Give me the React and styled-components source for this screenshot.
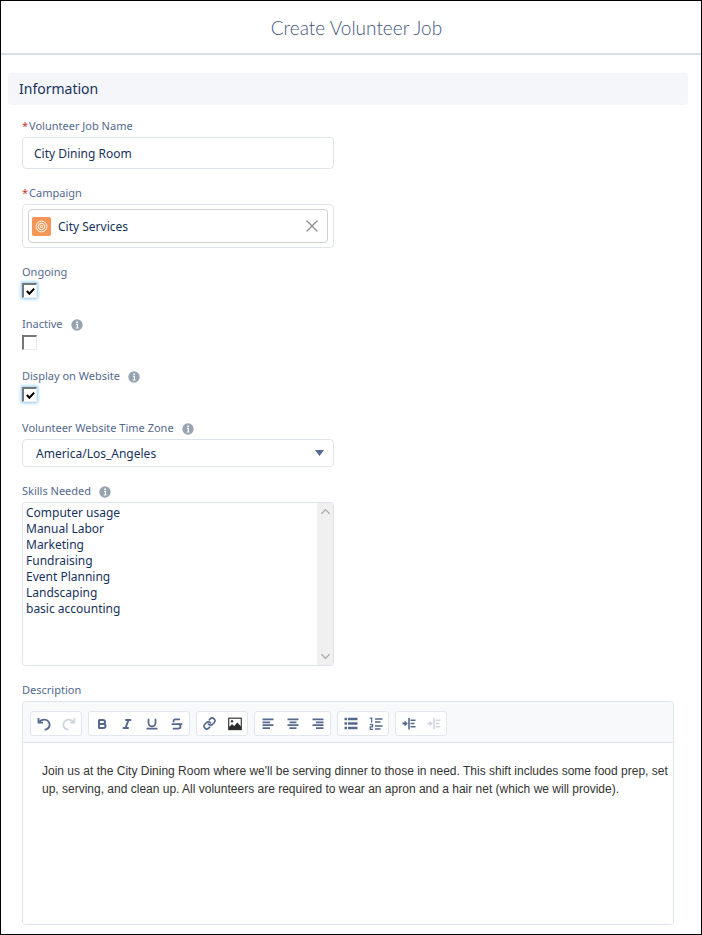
import { useState } from 'react';
import styled, { createGlobalStyle, css } from 'styled-components';
import { Bold, Italic, Underline, Strikethrough, Link, X, ChevronUp, ChevronDown } from 'lucide-react';

const GlobalStyle = createGlobalStyle`
    * {
        box-sizing: border-box;
    }
    body {
        margin: 0;
        background: #fff;
        color: #16325c;
        font-family: "Noto Sans", "Open Sans", sans-serif;
        font-size: 12px;
    }
    button, input, select, textarea {
        font: inherit;
        color: inherit;
    }
`
const Page = styled.main`
    min-height: 100vh;
    border: 1px solid #000;
    padding-bottom: 9px;
`
const Header = styled.header`
    display: flex;
    align-items: center;
    justify-content: center;
    height: 54px;
    padding: 2px 0 0 11px;
    border-bottom: 2px solid #d8dde6;
`
const Title = styled.h1`
    margin: 0;
    color: #3f557c;
    font-family: Lato, sans-serif;
    font-size: 19px;
    font-weight: 300;
    line-height: 24px;
`
const Section = styled.section`
    padding: 18px 13px 0 7px;
`
const SectionTitle = styled.h2`
    margin: 0;
    padding: 0 11px;
    border-radius: 4px;
    background: #f4f6fa;
    font-size: 14px;
    font-weight: 400;
    line-height: 32px;
`
const Fields = styled.form`
    display: flex;
    flex-direction: column;
    gap: 15px;
    padding: 12px 14px 0;
`
const Field = styled.div`
    display: flex;
    flex-direction: column;
    align-items: flex-start;
    gap: 3px;
    width: 100%;
    max-width: ${({ $wide }) => ($wide ? 'none' : '312px')};
`
const LabelRow = styled.div`
    display: flex;
    align-items: center;
    gap: 8px;
    height: 17px;
    color: #54698d;
    font-size: 11px;
    line-height: 17px;
`
const Required = styled.abbr`
    margin-right: 1px;
    color: #c23934;
    text-decoration: none;
`
const InfoButton = styled.button`
    display: flex;
    padding: 2px 0 0;
    border: none;
    background: none;
`
const box = css`
    width: 100%;
    border: 1px solid #dfe3ec;
    border-radius: 4px;
    background: #fff;
`
const TextInput = styled.input`
    ${box}
    height: 32px;
    padding: 0 11px;
    outline: none;
`
const Lookup = styled.div`
    ${box}
    padding: 4px 5px;
`
const Pill = styled.div`
    display: flex;
    align-items: center;
    gap: 7px;
    height: 34px;
    padding: 0 5px 0 3px;
    border: 1px solid #d0d0d0;
    border-radius: 4px;
`
const PillText = styled.span`
    flex: 1;
`
const ClearButton = styled.button`
    display: flex;
    padding: 0;
    border: none;
    background: none;
    color: #8c8c8c;
`
const Checkbox = styled.input`
    appearance: none;
    width: 15px;
    height: 15px;
    margin: 0 0 2px;
    border: solid;
    border-width: 2px 1px 1px 2px;
    border-color: #767676 #ececec #ececec #767676;
    background: #fff;
    &:checked {
        background: url("data:image/svg+xml,%3Csvg xmlns='http://www.w3.org/2000/svg' viewBox='0 0 12 12'%3E%3Cpath d='M2 5.5 4.8 8.5 10 2.8' fill='none' stroke='%23000' stroke-width='2.2'/%3E%3C/svg%3E") center / 11px no-repeat;
        box-shadow: 0 0 3px 1px #8cc8f5;
    }
`
const Select = styled.select`
    ${box}
    appearance: none;
    height: 28px;
    padding: 0 24px 0 13px;
    background: url("data:image/svg+xml,%3Csvg xmlns='http://www.w3.org/2000/svg' viewBox='0 0 9 6'%3E%3Cpath d='M0 0H9L4.5 6Z' fill='%2354698d'/%3E%3C/svg%3E") right 9px center / 9px 6px no-repeat;
`
const ListFrame = styled.div`
    ${box}
    display: flex;
    height: 164px;
    overflow: hidden;
`
const ListBox = styled.select`
    flex: 1;
    height: 100%;
    padding: 1px 0;
    border: none;
    outline: none;
    background: #fff;
    scrollbar-width: none;
`
const ListOption = styled.option`
    height: 16px;
    min-height: 16px;
    padding: 0 3px;
    line-height: 16px;
`
const Rail = styled.div`
    display: flex;
    flex-direction: column;
    justify-content: space-between;
    width: 16px;
    background: #f0f0f0;
`
const RailButton = styled.button`
    display: flex;
    align-items: center;
    justify-content: center;
    height: 17px;
    padding: 0;
    border: none;
    background: none;
    color: #a3a3a3;
`
const Editor = styled.div`
    ${box}
    overflow: hidden;
`
const Toolbar = styled.div`
    display: flex;
    flex-wrap: wrap;
    gap: 6px;
    padding: 9px 7px 6px;
    border-bottom: 1px solid #dfe3ec;
    background: #f7f9fb;
`
const ToolGroup = styled.div`
    display: flex;
    height: 25px;
    border: 1px solid #e2e6ee;
    border-radius: 3px;
    background: #fff;
`
const ToolButton = styled.button`
    display: flex;
    align-items: center;
    justify-content: center;
    width: 25px;
    padding: 0;
    border: none;
    background: none;
    color: #54698d;
    &:disabled {
        color: #cfd5df;
    }
`
const EditorText = styled.textarea`
    display: block;
    width: 100%;
    height: 181px;
    padding: 19px 4px 19px 19px;
    border: none;
    outline: none;
    resize: none;
    color: #333;
    font-family: "Liberation Sans", Arial, sans-serif;
    font-size: 12px;
    line-height: 18px;
`

const Svg = ({ children, size = 14 }) => (
    <svg width={size} height={size} viewBox={`0 0 ${size} ${size}`} fill="none" stroke="currentColor" aria-hidden="true">
        {children}
    </svg>
)

const InfoIcon = () => (
    <Svg size={12}>
        <circle cx="6" cy="6" r="5.7" fill="#97a3b1" stroke="none" />
        <path d="M5.1 5.4H6.4V9M4.7 9H7.5" stroke="#fff" strokeWidth="1.2" />
        <circle cx="6.1" cy="3.2" r="0.9" fill="#fff" stroke="none" />
    </Svg>
)

const CampaignIcon = () => (
    <Svg size={19}>
        <rect width="19" height="19" rx="2" fill="#f49756" stroke="none" />
        <g stroke="#fff">
            <circle cx="9.5" cy="9.5" r="5.4" />
            <circle cx="9.5" cy="9.5" r="3.2" />
            <circle cx="9.5" cy="9.5" r="1.1" />
        </g>
    </Svg>
)

const UndoIcon = () => (
    <Svg>
        <path d="M1.5 1V5.6H6" strokeWidth="1.8" />
        <path d="M2 5.2C4.5 2.2 9 1.8 11.3 4.4C14 7.6 12.3 12.4 7.6 12.8" strokeWidth="1.8" />
    </Svg>
)

const RedoIcon = () => (
    <Svg>
        <path d="M12.5 1V5.6H8" strokeWidth="1.8" />
        <path d="M12 5.2C9.5 2.2 5 1.8 2.7 4.4C0 7.6 1.7 12.4 6.4 12.8" strokeWidth="1.8" />
    </Svg>
)

const ImageIcon = () => (
    <Svg>
        <rect x="0.7" y="1.2" width="12.6" height="11.4" stroke="#3a3a3a" strokeWidth="1.2" />
        <path d="M1 12.5V10L4 7.2L6.2 9L9.3 5.6L13 9.4V12.5Z" fill="#2b2b2b" stroke="none" />
        <circle cx="4" cy="4.2" r="1.2" fill="#3a3a3a" stroke="none" />
    </Svg>
)

const BarsIcon = ({ bars }) => (
    <Svg>
        {bars.map(([x, width], i) => (
            <path key={i} d={`M${x} ${2.4 + i * 2.9}h${width}`} strokeWidth="1.8" />
        ))}
    </Svg>
)

const AlignLeftIcon = () => <BarsIcon bars={[[1.5, 11], [1.5, 7.5], [1.5, 11], [1.5, 7.5]]} />
const AlignCenterIcon = () => <BarsIcon bars={[[1.5, 11], [3.5, 7], [1.5, 11], [3.5, 7]]} />
const AlignRightIcon = () => <BarsIcon bars={[[1.5, 11], [5, 7.5], [1.5, 11], [5, 7.5]]} />

const BulletIcon = () => (
    <Svg>
        <path d="M0.5 2H3M0.5 6.5H3M0.5 11H3M4 2H13.5M4 6.5H13.5M4 11H13.5" strokeWidth="2.5" />
    </Svg>
)

const NumberIcon = () => (
    <Svg>
        <path d="M0.8 1.2H2.7V5.8M0.8 7.7H3.6V9.9H1.2V12.3H4.2" strokeWidth="1.2" />
        <path d="M6 2H13.6M6 5H11.5M6 9H13.6M6 12H11.5" strokeWidth="1.7" />
    </Svg>
)

const IndentIcon = () => (
    <Svg>
        <path d="M0.5 6.5H4" strokeWidth="1.8" />
        <path d="M2.6 3.6L5.8 6.5L2.6 9.4Z" fill="currentColor" stroke="none" />
        <path d="M7 1V12.5" strokeWidth="1.6" />
        <path d="M8.5 3.2H13.5M8.5 6.5H12.5M8.5 9.8H13.5" strokeWidth="1.6" />
    </Svg>
)

const toolGroups = [
    [
        { name: 'Undo', icon: <UndoIcon /> },
        { name: 'Redo', icon: <RedoIcon />, disabled: true },
    ],
    [
        { name: 'Bold', icon: <Bold size={12} strokeWidth={4} /> },
        { name: 'Italic', icon: <Italic size={12} strokeWidth={4} /> },
        { name: 'Underline', icon: <Underline size={14} strokeWidth={3} /> },
        { name: 'Strikethrough', icon: <Strikethrough size={14} strokeWidth={3} /> },
    ],
    [
        { name: 'Link', icon: <Link size={13} strokeWidth={3} /> },
        { name: 'Image', icon: <ImageIcon /> },
    ],
    [
        { name: 'Align left', icon: <AlignLeftIcon /> },
        { name: 'Align center', icon: <AlignCenterIcon /> },
        { name: 'Align right', icon: <AlignRightIcon /> },
    ],
    [
        { name: 'Bulleted list', icon: <BulletIcon /> },
        { name: 'Numbered list', icon: <NumberIcon /> },
    ],
    [
        { name: 'Indent', icon: <IndentIcon /> },
        { name: 'Outdent', icon: <IndentIcon />, disabled: true },
    ],
]

const skills = [
    'Computer usage',
    'Manual Labor',
    'Marketing',
    'Fundraising',
    'Event Planning',
    'Landscaping',
    'basic accounting',
]

const FormField = ({ id, label, required, info, wide, children }) => (
    <Field $wide={wide}>
        <LabelRow>
            <label htmlFor={id}>
                {required ? <Required>*</Required> : null}
                {label}
            </label>
            {info ? <InfoButton type="button" aria-label="Help"><InfoIcon /></InfoButton> : null}
        </LabelRow>
        {children}
    </Field>
)

const App = () => {
    const [job, setJob] = useState({
        name: 'City Dining Room',
        ongoing: true,
        inactive: false,
        display: true,
        description: "Join us at the City Dining Room where we'll be serving dinner to those in need. This shift includes some food prep, set up, serving, and clean up. All volunteers are required to wear an apron and a hair net (which we will provide).",
    })

    const changeHandler = (e) => {
        const { id, type, checked, value } = e.target
        setJob({ ...job, [id]: type === 'checkbox' ? checked : value })
    }

    return (
        <>
            <GlobalStyle />
            <Page>
                <Header>
                    <Title>Create Volunteer Job</Title>
                </Header>
                <Section>
                    <SectionTitle>Information</SectionTitle>
                    <Fields>
                        <FormField id="name" label="Volunteer Job Name" required>
                            <TextInput id="name" value={job.name} onChange={changeHandler} />
                        </FormField>
                        <FormField id="campaign" label="Campaign" required>
                            <Lookup>
                                <Pill>
                                    <CampaignIcon />
                                    <PillText>City Services</PillText>
                                    <ClearButton id="campaign" type="button" aria-label="Remove City Services">
                                        <X size={20} strokeWidth={1.5} />
                                    </ClearButton>
                                </Pill>
                            </Lookup>
                        </FormField>
                        <FormField id="ongoing" label="Ongoing">
                            <Checkbox id="ongoing" type="checkbox" checked={job.ongoing} onChange={changeHandler} />
                        </FormField>
                        <FormField id="inactive" label="Inactive" info>
                            <Checkbox id="inactive" type="checkbox" checked={job.inactive} onChange={changeHandler} />
                        </FormField>
                        <FormField id="display" label="Display on Website" info>
                            <Checkbox id="display" type="checkbox" checked={job.display} onChange={changeHandler} />
                        </FormField>
                        <FormField id="zone" label="Volunteer Website Time Zone" info>
                            <Select id="zone">
                                <option>America/Los_Angeles</option>
                            </Select>
                        </FormField>
                        <FormField id="skills" label="Skills Needed" info>
                            <ListFrame>
                                <ListBox id="skills" multiple size={10}>
                                    {skills.map((skill) => <ListOption key={skill}>{skill}</ListOption>)}
                                </ListBox>
                                <Rail>
                                    <RailButton type="button" aria-label="Scroll up"><ChevronUp size={15} /></RailButton>
                                    <RailButton type="button" aria-label="Scroll down"><ChevronDown size={15} /></RailButton>
                                </Rail>
                            </ListFrame>
                        </FormField>
                        <FormField id="description" label="Description" wide>
                            <Editor>
                                <Toolbar>
                                    {toolGroups.map((tools) => (
                                        <ToolGroup key={tools[0].name}>
                                            {tools.map(({ name, icon, disabled }) => (
                                                <ToolButton key={name} type="button" aria-label={name} disabled={disabled}>
                                                    {icon}
                                                </ToolButton>
                                            ))}
                                        </ToolGroup>
                                    ))}
                                </Toolbar>
                                <EditorText id="description" spellCheck={false} value={job.description} onChange={changeHandler} />
                            </Editor>
                        </FormField>
                    </Fields>
                </Section>
            </Page>
        </>
    );
}

export default App;
